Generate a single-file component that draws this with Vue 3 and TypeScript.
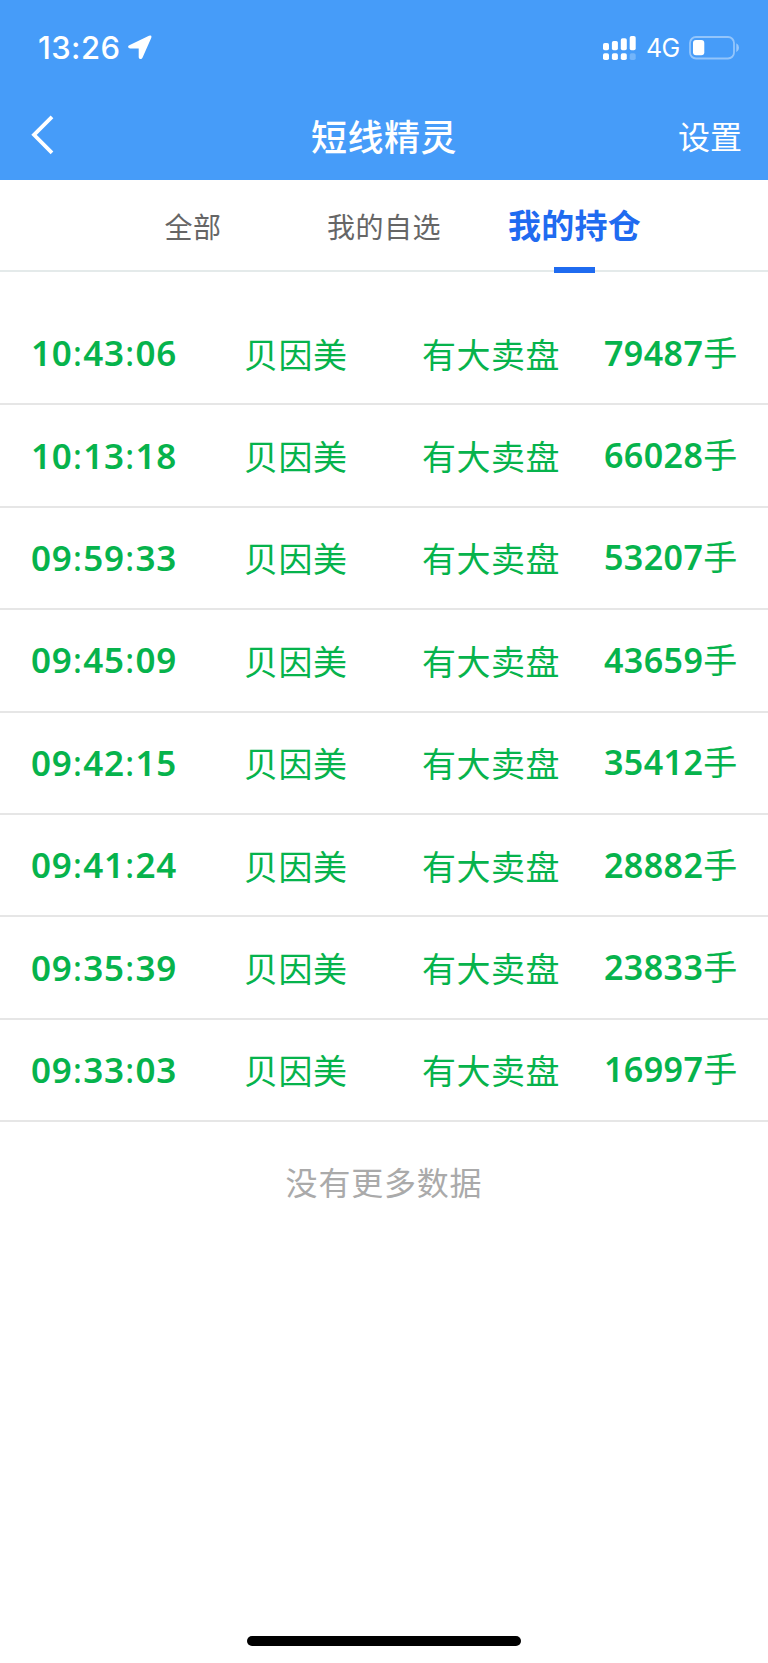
<script setup lang="ts">
import { ref } from 'vue'

interface Alert {
  time: string
  stock: string
  event: string
  volume: number
}

const tabs = ['全部', '我的自选', '我的持仓']
const active = ref(2)

const entries: [string, number][] = [
  ['10:43:06', 79487],
  ['10:13:18', 66028],
  ['09:59:33', 53207],
  ['09:45:09', 43659],
  ['09:42:15', 35412],
  ['09:41:24', 28882],
  ['09:35:39', 23833],
  ['09:33:03', 16997],
]
const alerts: Alert[] = entries.map(([time, volume]) => ({
  time,
  stock: '贝因美',
  event: '有大卖盘',
  volume,
}))
</script>

<template>
  <div class="screen">
    <header class="header">
      <div class="status">
        <span class="clock">13:26</span>
        <svg class="location" width="24" height="25" viewBox="0 0 24 25">
          <path d="M1.8 10.1 21 .8Q24.3-.2 23.2 3L14.6 22.4Q13.8 24.3 12.3 24 10.7 23.7 10.7 22.2V13.5H2.2Q.4 13.4.1 12.1-.1 10.8 1.8 10.1Z" fill="#fff" />
        </svg>
        <svg class="signal" width="33" height="25" viewBox="0 0 33 25" fill="#fff">
          <rect x="0" y="7" width="6" height="7.3" rx="1.8" />
          <rect x="8.9" y="5" width="6" height="9.3" rx="1.8" />
          <rect x="17.8" y="2.3" width="6" height="12" rx="1.8" />
          <rect x="26.7" y="0" width="6" height="14.3" rx="1.8" />
          <rect x="0" y="17.3" width="6" height="6.7" rx="1.8" />
          <rect x="8.9" y="17.3" width="6" height="6.7" rx="1.8" />
          <rect x="17.8" y="17.3" width="6" height="6.7" rx="1.8" />
          <rect x="26.7" y="17.3" width="6" height="6.7" rx="1.8" opacity=".25" />
        </svg>
        <span class="network">4G</span>
        <svg class="battery" width="51" height="24" viewBox="0 0 51 24">
          <rect x="1" y="1" width="44" height="21.5" rx="6" fill="none" stroke="#fff" stroke-opacity=".42" stroke-width="1.8" />
          <rect x="4" y="4" width="11.3" height="15.3" rx="3" fill="#fff" />
          <path d="M47.3 7.3Q50 8.6 50 11.8T47.3 16.3Z" fill="#fff" opacity=".45" />
        </svg>
      </div>
      <div class="nav">
        <svg class="back" width="24" height="40" viewBox="0 0 24 40">
          <path d="M21 1.8 3 19.8 21 37.8" fill="none" stroke="#fff" stroke-width="3.8" />
        </svg>
        <h1 class="title">短线精灵</h1>
        <span class="settings">设置</span>
      </div>
    </header>

    <nav class="tabs">
      <a
        v-for="(tab, i) in tabs"
        :key="tab"
        class="tab"
        :class="{ active: i === active }"
        @click="active = i"
      >{{ tab }}</a>
    </nav>

    <main class="list">
      <div v-for="a in alerts" :key="a.time" class="row">
        <span class="time"><template v-for="(part, i) in a.time.split(':')" :key="i"><span v-if="i" class="colon">:</span>{{ part }}</template></span>
        <span class="stock">{{ a.stock }}</span>
        <span class="event">{{ a.event }}</span>
        <span class="volume"><b>{{ a.volume }}</b>手</span>
      </div>
    </main>

    <p class="end">没有更多数据</p>
    <footer class="home"><div class="home-bar"></div></footer>
  </div>
</template>

<style>
body {
  margin: 0;
  background: #fff;
}
</style>

<style scoped>
.screen {
  display: flex;
  flex-direction: column;
  box-sizing: border-box;
  width: 768px;
  height: 1663px;
  overflow: hidden;
  background: #fff;
  font-family: 'Noto Sans', 'Noto Sans CJK SC', sans-serif;
}
.header {
  flex: none;
  height: 180.4px;
  background: #469cf9;
  color: #fff;
}
.status {
  display: flex;
  align-items: center;
  height: 94px;
  padding: 0 28px 0 38px;
}
.clock {
  width: 90px;
  margin-top: 1px;
  font: 500 31px/40px Inter, sans-serif;
  letter-spacing: 0.4px;
}
.location {
  margin-top: 1px;
}
.signal {
  margin: 2px 10px 0 auto;
}
.network {
  width: 43px;
  margin-top: 2px;
  font: 400 25px/30px Inter, sans-serif;
  letter-spacing: -0.7px;
}
.battery {
  margin-top: 1px;
}
.nav {
  display: grid;
  grid-template-columns: 200px 1fr 200px;
  align-items: center;
  height: 82px;
}
.back {
  margin-left: 31px;
}
.title {
  margin: 0;
  font: 500 36px/50px 'Noto Sans CJK SC', sans-serif;
  letter-spacing: 0.5px;
  text-align: center;
}
.settings {
  margin-right: 26px;
  font: 400 32px/50px 'Noto Sans CJK SC', sans-serif;
  text-align: right;
}
.tabs {
  display: grid;
  grid-template-columns: repeat(3, 191px);
  justify-content: center;
  flex: none;
  box-sizing: border-box;
  height: 91.6px;
  border-bottom: 2px solid #e4eaea;
}
.tab {
  position: relative;
  color: #666;
  font: 400 28px/92px 'Noto Sans CJK SC', sans-serif;
  letter-spacing: 0.5px;
  text-align: center;
}
.tab.active {
  color: #1f6bf0;
  font-size: 33px;
  font-weight: 700;
  line-height: 88px;
  letter-spacing: 0.2px;
  text-indent: -1px;
}
.tab.active::after {
  content: '';
  position: absolute;
  left: 74px;
  bottom: -1px;
  width: 41px;
  height: 6px;
  background: #1f6bf0;
}
.list {
  flex: none;
  padding-top: 31px;
}
.row {
  display: grid;
  grid-template-columns: 213px 178px 181px 1fr;
  align-items: center;
  box-sizing: border-box;
  height: 102.4px;
  padding-left: 31px;
  border-bottom: 2px solid #e6e6e6;
  color: #06b34c;
  font-size: 34px;
  line-height: 50px;
  white-space: nowrap;
}
.time {
  font-size: 35px;
  font-weight: 600;
  letter-spacing: 0.8px;
}
.colon {
  font-weight: 400;
  letter-spacing: 1.2px;
}
.stock,
.event {
  padding-top: 1px;
  font-family: 'Noto Sans CJK SC', sans-serif;
  letter-spacing: 0.5px;
}
.volume {
  padding: 0 0 1px 1px;
}
.volume b {
  font-weight: 600;
  letter-spacing: 0.4px;
}
.end {
  flex: none;
  margin: 34px 0 0;
  color: #aaa;
  font: 400 32px/50px 'Noto Sans CJK SC', sans-serif;
  letter-spacing: 0.8px;
  text-align: center;
}
.home {
  display: flex;
  justify-content: center;
  margin-top: auto;
  padding-bottom: 17px;
}
.home-bar {
  width: 274px;
  height: 10px;
  border-radius: 5px;
  background: #000;
}
</style>
